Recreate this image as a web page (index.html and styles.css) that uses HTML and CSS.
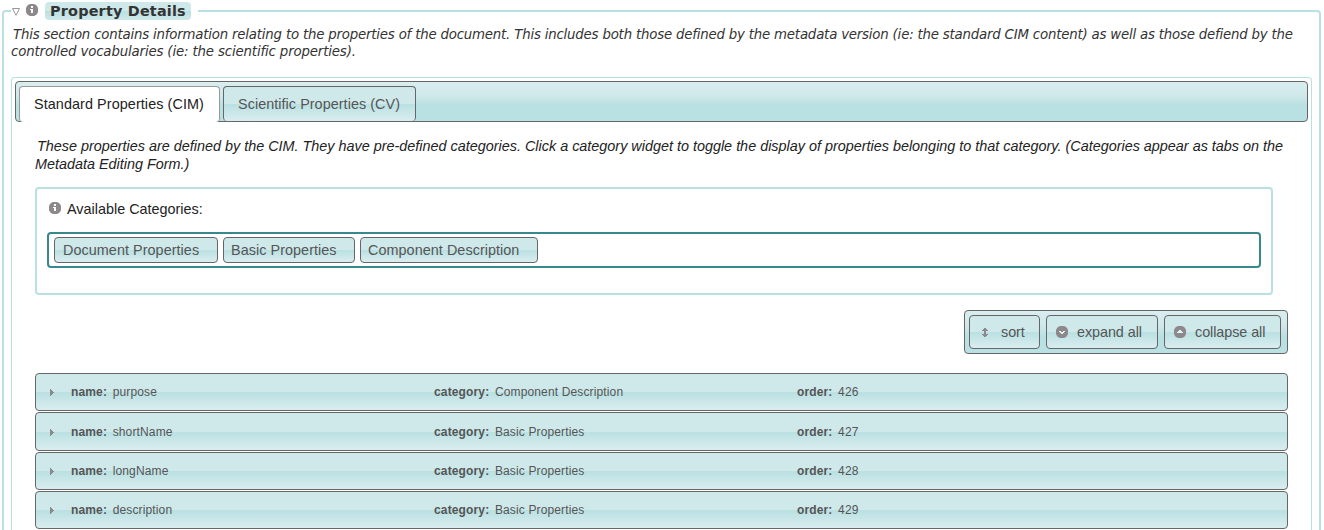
FILE: index.html
```html
<!DOCTYPE html>
<html lang="en">
<head>
<meta charset="utf-8">
<title>Property Details</title>
<link rel="stylesheet" href="styles.css">
</head>
<body>
<svg class="defs" width="0" height="0">
  <symbol id="info" viewBox="0 0 12 12"><path fill="#8c888b" d="M4 0h4l2 1 1 1 1 2v4l-1 2-1 1-2 1H4l-2-1-1-1-1-2V4l1-2 1-1z"/><path fill="#fff" d="M5 2h2v2H5zM4 5h3v4H5V6H4z"/></symbol>
  <symbol id="circle-down" viewBox="0 0 12 12"><path fill="#8c888b" d="M4 0h4l2 1 1 1 1 2v4l-1 2-1 1-2 1H4l-2-1-1-1-1-2V4l1-2 1-1z"/><path fill="#e4f4f5" d="M3 5h2v1h2V5h2v1H8v1H7v1H5V7H4V6H3z"/></symbol>
  <symbol id="circle-up" viewBox="0 0 12 12"><path fill="#8c888b" d="M4 0h4l2 1 1 1 1 2v4l-1 2-1 1-2 1H4l-2-1-1-1-1-2V4l1-2 1-1z"/><path fill="#e4f4f5" d="M3 7h6V6H8V5H7V4H5v1H4v1H3z"/></symbol>
  <symbol id="sort" viewBox="0 0 6 9"><path fill="#8c888b" d="M2 0h2v1h1v1h1v1H4v3h2v1H5v1H4v1H2V8H1V7H0V6h2V3H0V2h1V1h1z"/></symbol>
  <symbol id="arrow" viewBox="0 0 4 7"><path fill="#8c888b" d="M0 0h1v1h1v1h1v1h1v1H3v1H2v1H1v1H0z"/></symbol>
  <symbol id="triangle" viewBox="0 0 8 8"><path fill="#fff" stroke="#999" d="M.5.5h7L4 7.3z"/></symbol>
</svg>
<fieldset class="section">
  <legend class="legend"><svg class="toggle"><use href="#triangle"/></svg><svg class="info"><use href="#info"/></svg><span class="title">Property Details</span></legend>
  <p class="help"><span class="help-line">This section contains information relating to the properties of the document. This includes both those defined by the metadata version (ie: the standard CIM content) as well as those defiend by the</span><br>controlled vocabularies (ie: the scientific properties).</p>
  <div class="tabs">
    <div class="tab-bar"><div class="tab active"><span>Standard Properties (CIM)</span></div><div class="tab"><span>Scientific Properties (CV)</span></div></div>
    <div class="panel">
      <p class="intro">These properties are defined by the CIM. They have pre-defined categories. Click a category widget to toggle the display of properties belonging to that category. (Categories appear as tabs on the<br>Metadata Editing Form.)</p>
      <div class="categories">
        <div class="cat-head"><svg class="info"><use href="#info"/></svg><span>Available Categories:</span></div>
        <div class="cat-list"><span class="cat doc">Document Properties</span><span class="cat basic">Basic Properties</span><span class="cat comp">Component Description</span></div>
      </div>
      <div class="toolbar">
        <div class="button b-sort"><svg class="sort"><use href="#sort"/></svg><span>sort</span></div>
        <div class="button b-expand"><svg class="info"><use href="#circle-down"/></svg><span>expand all</span></div>
        <div class="button b-collapse"><svg class="info"><use href="#circle-up"/></svg><span>collapse all</span></div>
      </div>
      <div class="rows">
        <div class="row"><svg class="arrow"><use href="#arrow"/></svg><span><b>name:</b>purpose</span><span><b>category:</b>Component Description</span><span><b>order:</b>426</span></div>
        <div class="row tall"><svg class="arrow"><use href="#arrow"/></svg><span><b>name:</b>shortName</span><span><b>category:</b>Basic Properties</span><span><b>order:</b>427</span></div>
        <div class="row"><svg class="arrow"><use href="#arrow"/></svg><span><b>name:</b>longName</span><span><b>category:</b>Basic Properties</span><span><b>order:</b>428</span></div>
        <div class="row"><svg class="arrow"><use href="#arrow"/></svg><span><b>name:</b>description</span><span><b>category:</b>Basic Properties</span><span><b>order:</b>429</span></div>
      </div>
    </div>
  </div>
</fieldset>
</body>
</html>
```
FILE: styles.css
```css
* { box-sizing: border-box; }
body { margin: 0; background: #fff; color: #222; font: 14.4px/18px "Liberation Sans", Arial, sans-serif; }
p { margin: 0; white-space: nowrap; }
svg { display: block; flex: none; }
.defs { position: absolute; }
.info { width: 12px; height: 12px; }
.section { min-width: 0; height: 530px; margin: 0 3px 0 2px; padding: 0 7px; border: 2px solid #b9e0e2; border-bottom: 0; border-radius: 4px 4px 0 0; }
.legend { display: flex; align-items: flex-start; width: 187px; height: 22px; padding: 0; }
.toggle { width: 8px; height: 8px; margin: 8px 6px 0 1px; }
.legend .info { margin: 4px 7px 0 0; }
.title { width: 146px; height: 18px; margin-top: 2px; padding: 0 5px; border-radius: 4px; background: linear-gradient(#cfe8ea 50%, #b9e0e2 50%, #cfe8ea); color: #333; font: bold 14.4px/18px "DejaVu Sans", sans-serif; letter-spacing: 0.2px; white-space: nowrap; }
.help { padding-top: 4px; color: #333; font: italic 13.33px/17px "DejaVu Sans", sans-serif; letter-spacing: -0.15px; text-indent: 2px; }
.help-line { letter-spacing: -0.197px; }
.tabs { height: 453px; margin-top: 17px; padding: 3px 3px 0; border: 1px solid #b9e0e2; border-bottom: 0; border-radius: 4px 4px 0 0; }
.tab-bar { display: flex; align-items: flex-start; gap: 3px; height: 41px; padding: 4px 3px 0; border: 1px solid #666; border-radius: 4px; background: linear-gradient(#daedef, #cfe8ea 35%, #b9e0e2 60%, #b9e0e2); }
.tab { width: 193px; height: 35px; padding: 8px 14px; border: 1px solid #666; border-bottom: 0; border-radius: 4px; background: linear-gradient(#cfe8ea 50%, #b9e0e2 50%, #daedef); color: #555; letter-spacing: 0.05px; white-space: nowrap; }
.tab.active { width: 201px; height: 36px; border-color: #999; background: #fff; color: #222; letter-spacing: 0.08px; }
.panel { padding: 15px 20px 0; }
.intro { font-style: italic; text-indent: 2px; }
.categories { width: 1238px; height: 108px; margin-top: 14px; padding: 11px 10px; border: 2px solid #b9e0e2; border-radius: 4px; }
.cat-head { display: flex; align-items: flex-start; gap: 6px; padding-left: 2px; }
.cat-head .info { margin-top: 2px; }
.cat-list { display: flex; align-items: flex-start; gap: 5px; height: 36px; margin-top: 14px; padding: 3px 0 0 5px; border: 2px solid #37898d; border-radius: 4px; }
.cat { height: 26px; padding: 3px 8px; border: 1px solid #666; border-radius: 4px; background: linear-gradient(#cfe8ea 50%, #b9e0e2 50%, #daedef); color: #555; letter-spacing: 0.05px; white-space: nowrap; }
.doc { width: 164px; }
.basic { width: 132px; padding-left: 7px; }
.comp { width: 178px; padding-left: 7px; }
.toolbar { display: flex; gap: 6px; width: 324px; height: 44px; margin: 15px 0 0 auto; padding: 4px; border: 1px solid #666; border-radius: 4px; background: linear-gradient(#daedef, #cfe8ea 35%, #b9e0e2 60%, #b9e0e2); }
.button { display: flex; align-items: center; height: 34px; border: 1px solid #666; border-radius: 4px; background: linear-gradient(#cfe8ea 50%, #b9e0e2 50%, #daedef); color: #555; letter-spacing: -0.07px; white-space: nowrap; }
.b-sort { width: 71px; padding-left: 12px; gap: 13px; }
.b-expand { width: 112px; padding-left: 9px; gap: 9px; }
.b-collapse { width: 117px; padding-left: 9px; gap: 9px; }
.sort { width: 6px; height: 9px; }
.rows { display: grid; gap: 1px; margin-top: 19px; }
.row { display: grid; grid-template-columns: 35px 363px 363px 1fr; align-items: center; height: 38px; border: 1px solid #666; border-radius: 4px; background: linear-gradient(#cfe8ea 50%, #b9e0e2 50%, #daedef); color: #555; font-size: 12px; letter-spacing: 0.14px; }
.row.tall { height: 39px; }
.row b { margin-right: 5.6px; }
.arrow { width: 4px; height: 7px; margin: 1px 0 0 14px; }
```
